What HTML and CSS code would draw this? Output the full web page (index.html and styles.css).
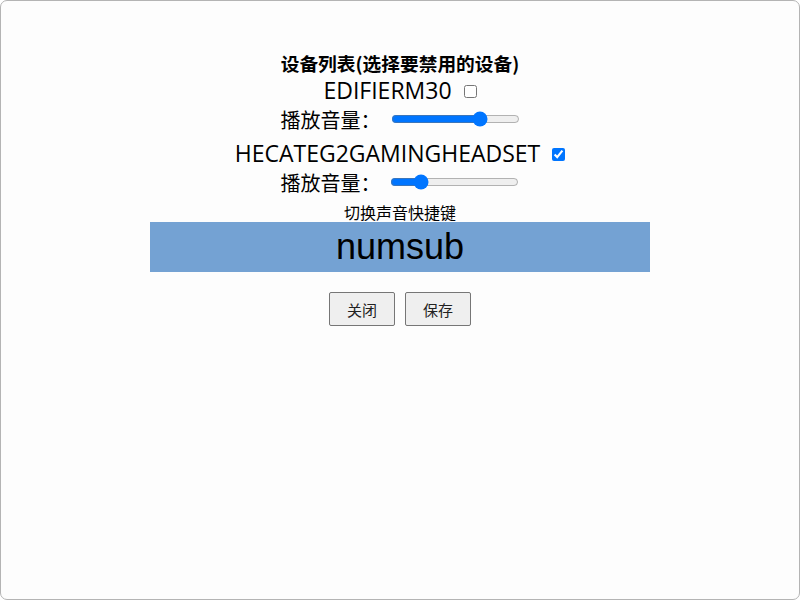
FILE: index.html
```html
<!DOCTYPE html>
<html lang="zh-CN">
<head>
<meta charset="utf-8">
<title>设备列表</title>
<link rel="stylesheet" href="styles.css">
</head>
<body>
<div class="window">
  <div class="title">设备列表(选择要禁用的设备)</div>
  <div class="device">
    <div class="name-row"><span class="name">EDIFIERM30</span><input type="checkbox" class="check"></div>
    <div class="vol-row"><span class="label">播放音量：</span><input type="range" class="range" min="0" max="100" value="72"></div>
  </div>
  <div class="device">
    <div class="name-row"><span class="name">HECATEG2GAMINGHEADSET</span><input type="checkbox" class="check" checked></div>
    <div class="vol-row"><span class="label">播放音量：</span><input type="range" class="range" min="0" max="100" value="20"></div>
  </div>
  <div class="hotkey-label">切换声音快捷键</div>
  <div class="hotkey">numsub</div>
  <div class="buttons">
    <button class="btn">关闭</button>
    <button class="btn">保存</button>
  </div>
</div>
</body>
</html>
```

FILE: styles.css
```css
html, body {
  margin: 0;
  padding: 0;
  background: #ffffff;
}
.window {
  box-sizing: border-box;
  width: 800px;
  height: 600px;
  border: 1px solid #b4b4b4;
  border-radius: 7px;
  background: #fdfdfd;
  padding-top: 49px;
  display: flex;
  flex-direction: column;
  align-items: center;
  font-family: "Open Sans", "Noto Sans CJK SC", sans-serif;
  color: #000;
}
.title {
  font-family: "Noto Sans CJK SC", sans-serif;
  font-size: 18.72px;
  font-weight: bold;
  line-height: 26px;
  height: 26px;
}
.device {
  display: flex;
  flex-direction: column;
  align-items: center;
  margin-bottom: 5px;
}
.name-row {
  display: flex;
  align-items: center;
  height: 28px;
  font-size: 23px;
}
.name {
  font-family: "Open Sans", sans-serif;
  line-height: 28px;
}
.check {
  width: 13px;
  height: 13px;
  margin: 2px 0 0 12px;
}
.vol-row {
  display: flex;
  align-items: center;
  height: 30px;
  font-size: 20px;
  font-family: "Noto Sans CJK SC", sans-serif;
}
.range {
  width: 129px;
  margin: 0 0 0 10px;
}
.hotkey-label {
  font-family: "Noto Sans CJK SC", sans-serif;
  font-size: 16px;
  line-height: 20px;
  height: 20px;
}
.hotkey {
  width: 500px;
  height: 50px;
  background: #74a2d3;
  font-family: "Liberation Sans", Arial, sans-serif;
  font-size: 36px;
  line-height: 50px;
  text-align: center;
}
.buttons {
  display: flex;
  gap: 10px;
  margin-top: 20px;
}
.btn {
  box-sizing: border-box;
  width: 66px;
  height: 34px;
  font-family: "Noto Sans CJK SC", sans-serif;
  font-size: 15px;
  background: #efefef;
  border: 1px solid #767676;
  border-radius: 2px;
  color: #222;
  padding: 0;
}
```
